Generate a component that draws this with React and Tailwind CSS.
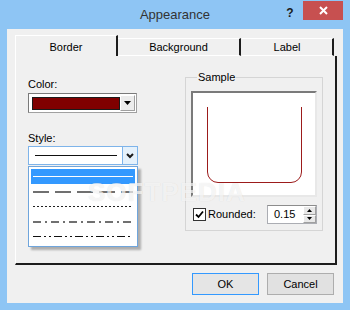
import React from "react"

const LinePreview = ({ dash, color, width = 1, y = 1.5 }) => (
  <svg width="100" height="4" className="block">
    <line x1="0" y1={y} x2="100" y2={y} stroke={color} strokeWidth={width} strokeDasharray={dash} />
  </svg>
)

const styles = [
  { dash: "", color: "#ffffff", width: 1, y: 1.5 },
  { dash: "16 6", color: "#707070", width: 2, y: 2 },
  { dash: "2 2", color: "#202020", width: 1, y: 1.5 },
  { dash: "8 4 2 4", color: "#707070", width: 2, y: 2 },
  { dash: "8 3 2 3 2 3", color: "#101010", width: 1, y: 1.5 },
]

function Tab({ label, width, selected }) {
  return (
    <div
      className={
        selected
          ? "h-[21px] pt-[3px] flex items-center justify-center border-l border-t border-white border-r-2 border-r-[#1c1c1c] bg-[#f0f0f0]"
          : "h-[18px] flex items-center justify-center border-t border-white border-r-2 border-r-[#1c1c1c] border-b border-b-white bg-[#f0f0f0]"
      }
      style={{ width }}
    >
      {label}
    </div>
  )
}

export default function App() {
  return (
    <div className="w-[350px] h-[310px] bg-[#8ec5f4] flex flex-col font-['Liberation_Sans',Arial,sans-serif] text-[11px] leading-[13px] text-black relative overflow-hidden">
      {/* title bar */}
      <div className="h-[29px] grid grid-cols-[1fr_auto_1fr]">
        <div />
        <div className="pt-[7px] text-[13px] leading-[16px] text-[#333333]">Appearance</div>
        <div className="flex justify-end items-start pr-[7px]">
          <span className="w-[26px] mt-[6px] text-center text-[12px] leading-[14px] font-bold text-[#1a1a1a]">?</span>
          <div className="mt-[1px] w-[40px] h-[19px] bg-[#c75050] flex items-center justify-center">
            <svg width="9" height="9" viewBox="0 0 9 9">
              <path d="M1 1 L8 8 M8 1 L1 8" stroke="#ffffff" strokeWidth="2" />
            </svg>
          </div>
        </div>
      </div>

      {/* client area */}
      <div className="flex-1 mx-[7px] mb-[7px] bg-[#f0f0f0] flex flex-col pl-[8px] pt-[6px]">
        {/* tabs */}
        <div className="h-[21px] flex items-end">
          <Tab label="Border" width={103} selected />
          <Tab label="Background" width={123} />
          <div className="w-[1px]" />
          <Tab label="Label" width={92} />
        </div>

        {/* tab panel */}
        <div className="w-[322px] h-[209px] border-l border-white border-r-2 border-r-[#1c1c1c] border-b-2 border-b-[#1c1c1c] flex">
          {/* left column */}
          <div className="w-[169px] pl-[12px] pt-[22px] flex flex-col">
            <div>Color:</div>
            <div className="mt-[2px] w-[109px] h-[20px] border border-[#a0a0a0] border-t-[#7a7a7a] border-l-[#7a7a7a] bg-white flex items-center pl-[3px] pr-[1px]">
              <div className="w-[88px] h-[13px] bg-[#800000] border border-[#1a1a1a]" />
              <div className="ml-auto w-[15px] h-[16px] bg-[#ececec] border border-white border-r-[#a0a0a0] border-b-[#a0a0a0] flex items-center justify-center">
                <svg width="7" height="4" viewBox="0 0 7 4">
                  <path d="M0 0 H7 L3.5 4 Z" fill="#000000" />
                </svg>
              </div>
            </div>

            <div className="mt-[19px]">Style:</div>
            <div className="relative mt-[1px]">
              <div className="w-[110px] h-[19px] border border-[#7eb4ea] bg-white flex items-center">
                <div className="pl-[6px] w-[94px]">
                  <div className="w-[82px] h-[1px] bg-[#111111]" />
                </div>
                <div className="ml-auto w-[15px] h-full border-l border-[#7eb4ea] bg-[#e5f1fb] flex items-center justify-center">
                  <svg width="8" height="6" viewBox="0 0 8 6">
                    <path d="M1 1 L4 4 L7 1" stroke="#1a1a1a" strokeWidth="2" fill="none" />
                  </svg>
                </div>
              </div>

              {/* open drop list */}
              <div className="absolute left-0 top-[20px] w-[110px] border border-[#6fa5dc] bg-white p-[2px] shadow-[3px_3px_2px_rgba(0,0,0,0.28)] z-10">
                {styles.map((s, i) => (
                  <div
                    key={i}
                    className={i === 0 ? "h-[15px] flex items-center px-[2px] bg-[#3399ff]" : "h-[15px] flex items-center px-[2px]"}
                  >
                    <LinePreview {...s} />
                  </div>
                ))}
              </div>
            </div>
          </div>

          {/* sample group */}
          <div className="pt-[15px]">
            <fieldset className="w-[137px] border border-[#d5d5d5] px-[5px] pb-[6px]">
              <legend className="ml-[6px] px-[1px]">Sample</legend>
              <div className="mt-[7px] w-[126px] h-[106px] bg-white border-2 border-t-[#7a7a7a] border-l-[#7a7a7a] border-r-[#e8e8e8] border-b-[#e8e8e8]">
                <svg width="122" height="102" viewBox="0 0 122 102" className="block">
                  <path d="M14.5 14 V79 A10.5 10.5 0 0 0 25 89.5 H98 A10.5 10.5 0 0 0 108.5 79 V14" stroke="#9c1b1b" strokeWidth="1" fill="none" />
                </svg>
              </div>
              <div className="mt-[8px] h-[19px] flex items-center">
                <div className="ml-[2px] w-[13px] h-[13px] border border-[#333333] bg-white flex items-center justify-center">
                  <svg width="9" height="9" viewBox="0 0 9 9">
                    <path d="M1 4.5 L3.5 7 L8 1.5" stroke="#000000" strokeWidth="1.8" fill="none" />
                  </svg>
                </div>
                <span className="ml-[2px]">Rounded:</span>
                <div className="ml-auto w-[50px] h-[19px] border border-[#abadb3] border-t-[#8c8c8c] bg-white flex items-center">
                  <span className="pl-[6px] flex-1">0.15</span>
                  <div className="w-[13px] h-full flex flex-col">
                    <div className="flex-1 bg-[#e8e8e8] border border-white border-r-[#a0a0a0] border-b-[#a0a0a0] flex items-center justify-center">
                      <svg width="5" height="3" viewBox="0 0 5 3"><path d="M0 3 H5 L2.5 0 Z" fill="#000" /></svg>
                    </div>
                    <div className="flex-1 bg-[#e8e8e8] border border-white border-r-[#a0a0a0] border-b-[#a0a0a0] flex items-center justify-center">
                      <svg width="5" height="3" viewBox="0 0 5 3"><path d="M0 0 H5 L2.5 3 Z" fill="#000" /></svg>
                    </div>
                  </div>
                </div>
              </div>
            </fieldset>
          </div>
        </div>

        {/* buttons */}
        <div className="mt-[8px] flex justify-end gap-[8px] pr-[9px]">
          <button className="w-[67px] h-[22px] bg-[#e5e5e5] border border-[#3399ff] text-[11px]">OK</button>
          <button className="w-[67px] h-[22px] bg-[#e1e1e1] border border-[#adadad] text-[11px]">Cancel</button>
        </div>
      </div>

      {/* watermark */}
      <div className="absolute left-[88px] top-[182px] text-[26px] leading-[20px] font-bold text-white/70 tracking-[1px] [text-shadow:0_0_1px_rgba(0,0,0,0.12)] pointer-events-none z-20">
        SOFTPEDIA
      </div>
    </div>
  )
}
